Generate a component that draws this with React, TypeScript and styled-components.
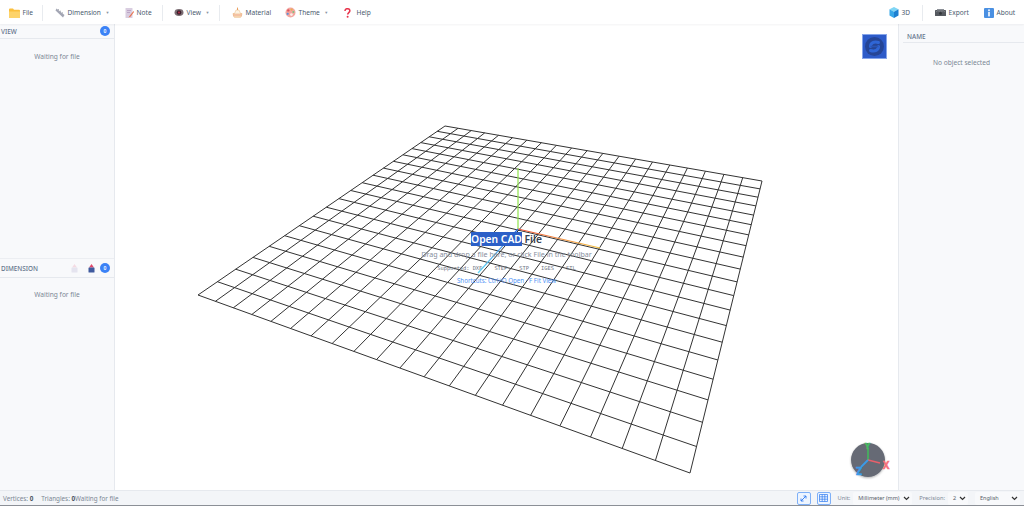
import { ReactElement } from 'react';
import styled, { createGlobalStyle } from 'styled-components';

const GlobalStyle = createGlobalStyle`
  html, body {
    margin: 0;
    padding: 0;
    height: 100%;
    overflow: hidden;
    background: #fff;
    font-family: 'Noto Sans', 'Open Sans', sans-serif;
  }
  #root { height: 100%; }
`;

// grid corners measured from the reference, mapped through a homography
type Pt = [number, number];
const CORNERS: Pt[] = [
  [445, 126],
  [762, 181],
  [690, 473],
  [198, 295],
];
const DIVISIONS = 20;

const makeProject = (q: Pt[]) => {
  const [[x0, y0], [x1, y1], [x2, y2], [x3, y3]] = q;
  const dx1 = x1 - x2;
  const dx2 = x3 - x2;
  const sx = x0 - x1 + x2 - x3;
  const dy1 = y1 - y2;
  const dy2 = y3 - y2;
  const sy = y0 - y1 + y2 - y3;
  const det = dx1 * dy2 - dx2 * dy1;
  const g = (sx * dy2 - dx2 * sy) / det;
  const h = (dx1 * sy - sx * dy1) / det;
  const a = x1 - x0 + g * x1;
  const b = x3 - x0 + h * x3;
  const d = y1 - y0 + g * y1;
  const e = y3 - y0 + h * y3;
  return (u: number, v: number): Pt => {
    const w = g * u + h * v + 1;
    return [(a * u + b * v + x0) / w, (d * u + e * v + y0) / w];
  };
};

const project = makeProject(CORNERS);

const gridPath = (): string => {
  let d = '';
  const fmt = (p: Pt) => `${p[0].toFixed(1)} ${p[1].toFixed(1)}`;
  for (let i = 0; i <= DIVISIONS; i++) {
    const t = i / DIVISIONS;
    d += `M${fmt(project(t, 0))}L${fmt(project(t, 1))}`;
    d += `M${fmt(project(0, t))}L${fmt(project(1, t))}`;
  }
  return d;
};

const Shell = styled.div`
  display: flex;
  flex-direction: column;
  height: 506px;
  width: 1024px;
  color: #4b5563;
`;

const Toolbar = styled.header`
  display: flex;
  align-items: center;
  justify-content: space-between;
  height: 24px;
  flex: none;
  padding: 1px 6px 0 9px;
  box-sizing: border-box;
  background: #fff;
  box-shadow: 0 1px 2px rgba(15, 23, 42, 0.05);
  position: relative;
  z-index: 2;
`;

const ToolGroup = styled.div`
  display: flex;
  align-items: center;
`;

const ToolButton = styled.div<{ $w: number }>`
  display: flex;
  align-items: center;
  gap: 2.5px;
  width: ${({ $w }) => $w}px;
  font-size: 6.6px;
  line-height: 10px;
  color: #4b5a6e;
  white-space: nowrap;
`;

const Caret = styled.span`
  font-size: 4px;
  margin-left: 2px;
  color: #8a93a3;
`;

const ToolDivider = styled.div<{ $gap: number }>`
  width: 1px;
  height: 16px;
  background: #e8ebef;
  margin: 0 ${({ $gap }) => $gap}px 0 0;
`;

const Main = styled.div`
  display: flex;
  flex: 1;
  min-height: 0;
`;

const SidePanel = styled.aside<{ $w: number; $side: 'left' | 'right' }>`
  display: flex;
  flex-direction: column;
  flex: none;
  width: ${({ $w }) => $w}px;
  background: #f8f9fb;
  border-${({ $side }) => ($side === 'left' ? 'right' : 'left')}: 1px solid #e6e9ee;
  box-sizing: border-box;
`;

const PanelSection = styled.section<{ $h?: number }>`
  flex: ${({ $h }) => ($h ? `0 0 ${$h}px` : '1')};
  min-height: 0;
`;

const PanelHeader = styled.div`
  display: flex;
  align-items: center;
  justify-content: space-between;
  height: 15px;
  padding: 0 4px 0 1px;
  border-bottom: 1px solid #e6e9ee;
  box-sizing: border-box;
  font-size: 6.4px;
  font-weight: 500;
  color: #64748b;
`;

const TallHeader = styled(PanelHeader)`
  height: 20px;
  border-top: 1px solid #eceef2;
`;

const NameHeader = styled(PanelHeader)`
  height: 19px;
  margin-left: 4px;
  padding: 6px 4px 0;
`;

const HeaderTools = styled.div`
  display: flex;
  align-items: center;
`;

const PinSlot = styled.span<{ $mr: number }>`
  display: flex;
  margin-right: ${({ $mr }) => $mr}px;
`;

const Badge = styled.span`
  display: flex;
  align-items: center;
  justify-content: center;
  width: 10px;
  height: 10px;
  border-radius: 50%;
  background: #3b82f6;
  color: #fff;
  font-size: 5px;
  font-weight: 600;
`;

const EmptyText = styled.div<{ $top: number }>`
  padding-top: ${({ $top }) => $top}px;
  text-align: center;
  font-size: 6.6px;
  line-height: 10px;
  color: #7b8794;
`;

const Viewport = styled.main`
  position: relative;
  flex: 1;
  min-width: 0;
  background: #fff;
  overflow: hidden;
`;

const GridSvg = styled.svg`
  position: absolute;
  inset: 0;
  width: 100%;
  height: 100%;
`;

const Hint = styled.div`
  position: absolute;
  left: 0;
  right: 0;
  top: 208px;
  display: flex;
  flex-direction: column;
  align-items: center;
`;

const HintTitle = styled.div`
  font-size: 10.3px;
  line-height: 15px;
  font-weight: 600;
  color: #374151;
  white-space: pre;
`;

const Selected = styled.span`
  background: #2b5fc7;
  color: #fff;
`;

const HintBody = styled.div`
  margin-top: 2px;
  font-size: 7.1px;
  line-height: 11px;
  color: #868e9c;
`;

const Formats = styled.div`
  display: flex;
  gap: 12px;
  margin-top: 2px;
  font-family: 'DejaVu Sans Mono', monospace;
  font-size: 5.4px;
  line-height: 12px;
  color: #6f7684;
`;

const FormatsLabel = styled.span`
  margin-right: -9px;
`;

const Shortcuts = styled.div`
  margin-top: 1px;
  font-size: 6.2px;
  line-height: 12px;
  color: #4f93f5;
`;

const Thumb = styled.div`
  position: absolute;
  top: 10px;
  right: 11px;
  width: 25px;
  height: 25px;
`;

const Gizmo = styled.div`
  position: absolute;
  right: 7px;
  bottom: 7px;
  width: 42px;
  height: 42px;
`;

const StatusBar = styled.footer`
  display: flex;
  align-items: center;
  justify-content: space-between;
  flex: none;
  height: 16px;
  padding: 0 4px 0 3px;
  background: #f3f5f8;
  border-top: 1px solid #e6e9ee;
  border-bottom: 1px solid #8b8f96;
  box-sizing: border-box;
  font-size: 6.3px;
  color: #7b8794;
`;

const StatusGroup = styled.div`
  display: flex;
  align-items: center;
`;

const StatusCount = styled.span`
  font-weight: 700;
  color: #4b5563;
`;

const StatusItem = styled.span<{ $gap?: number }>`
  margin-right: ${({ $gap }) => $gap ?? 0}px;
  white-space: nowrap;
`;

const SquareButton = styled.div<{ $mr: number }>`
  display: flex;
  align-items: center;
  justify-content: center;
  width: 14px;
  height: 13px;
  margin-right: ${({ $mr }) => $mr}px;
  border: 1px solid #7fb0f7;
  border-radius: 2px;
  background: #eef5ff;
  box-sizing: border-box;
`;

const FieldLabel = styled.span`
  margin-right: 3px;
  font-size: 5.7px;
  white-space: nowrap;
`;

const FakeSelect = styled.div<{ $w: number; $gap: number }>`
  display: flex;
  align-items: center;
  justify-content: space-between;
  width: ${({ $w }) => $w}px;
  height: 13px;
  margin-right: ${({ $gap }) => $gap}px;
  padding: 0 2px 0 5px;
  background: #f8f9fb;
  border-radius: 2px;
  box-sizing: border-box;
  font-size: 5.5px;
  color: #555b66;
  white-space: nowrap;
`;

const FolderIcon = () => (
  <svg width="11" height="10" viewBox="0 0 11 10">
    <path d="M0 1.5a1 1 0 0 1 1-1h3l1 1.2h5a1 1 0 0 1 1 1V9a1 1 0 0 1-1 1H1a1 1 0 0 1-1-1z" fill="#fbbf3c" />
    <path d="M0 3.4h11V9a1 1 0 0 1-1 1H1a1 1 0 0 1-1-1z" fill="#fdd36a" />
  </svg>
);

const RulerIcon = () => (
  <svg width="10" height="10" viewBox="0 0 10 10">
    <path d="M1.5 0.5 9.5 7 8 9.5 0.5 2.5z" fill="#a3a6b4" />
    <path d="M3 2 4 1.2M5 3.6 6 2.8M7 5.2 8 4.4" stroke="#7b7f8c" strokeWidth="0.6" />
  </svg>
);

const NoteIcon = () => (
  <svg width="9" height="10" viewBox="0 0 9 10">
    <rect x="0.5" y="0" width="7" height="10" rx="0.6" fill="#d9cde0" />
    <path d="M2 2.5h4M2 4.5h3" stroke="#a78bb5" strokeWidth="0.6" />
    <path d="M8.5 3 4.5 8 3.5 9.5 5.5 8.8 9 4z" fill="#e8734f" />
  </svg>
);

const EyeIcon = () => (
  <svg width="10" height="9" viewBox="0 0 10 9">
    <ellipse cx="5" cy="4.5" rx="4.5" ry="3.4" fill="#7a6c72" />
    <circle cx="5" cy="4.5" r="2.3" fill="#3b1f2b" />
    <circle cx="5" cy="4.5" r="1" fill="#b5304a" />
  </svg>
);

const MaterialIcon = () => (
  <svg width="11" height="11" viewBox="0 0 11 11">
    <path d="M1 6.5h9l-.7 3a1 1 0 0 1-1 .8H2.7a1 1 0 0 1-1-.8z" fill="#f7d9b5" stroke="#e5a86a" strokeWidth="0.5" />
    <path d="M2.5 6.5 4 3h3l1.5 3.5" fill="#fdf3e3" stroke="#e9b680" strokeWidth="0.5" />
    <path d="M5.5 3V0.6" stroke="#e8944e" strokeWidth="0.9" />
    <path d="M1.2 8h8.6" stroke="#ef8f7a" strokeWidth="0.6" />
  </svg>
);

const PaletteIcon = () => (
  <svg width="11" height="11" viewBox="0 0 11 11">
    <circle cx="5.5" cy="5.5" r="5" fill="#f3a6a0" />
    <circle cx="3.3" cy="3.4" r="1.2" fill="#e0565f" />
    <circle cx="6.6" cy="2.6" r="1.1" fill="#e9b04c" />
    <circle cx="8.4" cy="5" r="1" fill="#7cc47f" />
    <circle cx="2.7" cy="6.8" r="1.1" fill="#5a8fd8" />
    <circle cx="6.4" cy="7.6" r="1.4" fill="#fbeee8" />
  </svg>
);

const HelpIcon = () => (
  <svg width="10" height="10" viewBox="0 0 10 10">
    <path d="M1 2.9C1 1.5 2 .7 3.4 .7s2.5 .8 2.5 2.1c0 1.8-2.2 1.9-2.2 3.6" fill="none" stroke="#e8324a" strokeWidth="1.5" />
    <circle cx="3.6" cy="8.8" r="1" fill="#e8324a" />
  </svg>
);

const CubeIcon = () => (
  <svg width="10" height="11" viewBox="0 0 10 11">
    <path d="M5 0 9.5 2.3 5 4.8 .5 2.3z" fill="#7fd6f5" />
    <path d="M.5 2.3 5 4.8V11L.5 8.5z" fill="#37a7e8" />
    <path d="M9.5 2.3 5 4.8V11l4.5-2.5z" fill="#1c7fd1" />
  </svg>
);

const CameraIcon = () => (
  <svg width="11" height="7" viewBox="0 0 11 7">
    <rect x="0" y="1" width="11" height="6" rx="0.6" fill="#55595f" />
    <rect x="2" y="0" width="7" height="1.5" fill="#8b8f96" />
    <path d="M1 2.6h9" stroke="#a5a9b0" strokeWidth="0.5" strokeDasharray="1 0.6" />
    <circle cx="5.5" cy="4.4" r="1.4" fill="#33363b" />
  </svg>
);

const InfoIcon = () => (
  <svg width="10" height="10" viewBox="0 0 10 10">
    <rect width="10" height="10" rx="1" fill="#4a90e2" />
    <rect x="4.2" y="1.4" width="1.6" height="1.6" fill="#fff" />
    <rect x="4.2" y="3.8" width="1.6" height="4.6" fill="#fff" />
  </svg>
);

const PinIcon = ({ faded }: { faded?: boolean }) => (
  <svg width="9" height="9" viewBox="0 0 9 9" opacity={faded ? 0.16 : 1}>
    <path d="M4.5 0 7 3.4H2z" fill="#e0486a" />
    <rect x="1.5" y="3.4" width="6" height="5" rx="0.5" fill={faded ? '#8a7fb5' : '#3f5a9e'} />
  </svg>
);

const Chevron = () => (
  <svg width="7" height="5" viewBox="0 0 7 5">
    <path d="M1 1 3.5 3.5 6 1" fill="none" stroke="#333" strokeWidth="1.2" />
  </svg>
);

const FORMATS = ['DXF', 'STEP', 'STP', 'IGES', 'STL'];

export default function App(): ReactElement {
  return (
    <Shell>
      <GlobalStyle />
      <Toolbar>
        <ToolGroup>
          <ToolButton $w={33}><FolderIcon />File</ToolButton>
          <ToolDivider $gap={12} />
          <ToolButton $w={70}><RulerIcon />Dimension<Caret>▼</Caret></ToolButton>
          <ToolButton $w={37}><NoteIcon />Note</ToolButton>
          <ToolDivider $gap={11} />
          <ToolButton $w={45}><EyeIcon />View<Caret>▼</Caret></ToolButton>
          <ToolDivider $gap={12} />
          <ToolButton $w={53}><MaterialIcon />Material</ToolButton>
          <ToolButton $w={59}><PaletteIcon />Theme<Caret>▼</Caret></ToolButton>
          <ToolButton $w={40}><HelpIcon />Help</ToolButton>
        </ToolGroup>
        <ToolGroup>
          <ToolButton $w={33}><CubeIcon />3D</ToolButton>
          <ToolDivider $gap={12} />
          <ToolButton $w={49}><CameraIcon />Export</ToolButton>
          <ToolButton $w={34}><InfoIcon />About</ToolButton>
        </ToolGroup>
      </Toolbar>
      <Main>
        <SidePanel $w={115} $side="left">
          <PanelSection $h={234}>
            <PanelHeader>
              VIEW
              <Badge>0</Badge>
            </PanelHeader>
            <EmptyText $top={13}>Waiting for file</EmptyText>
          </PanelSection>
          <PanelSection>
            <TallHeader>
              DIMENSION
              <HeaderTools>
                <PinSlot $mr={8}><PinIcon faded /></PinSlot>
                <PinSlot $mr={4}><PinIcon /></PinSlot>
                <Badge>0</Badge>
              </HeaderTools>
            </TallHeader>
            <EmptyText $top={12}>Waiting for file</EmptyText>
          </PanelSection>
        </SidePanel>
        <Viewport>
          <GridSvg viewBox="115 24 783 466" preserveAspectRatio="xMinYMin">
            <defs>
              <linearGradient id="ax" gradientUnits="userSpaceOnUse" x1="518" y1="229" x2="600" y2="248">
                <stop offset="0" stopColor="#f0523a" />
                <stop offset="1" stopColor="#f5c542" />
              </linearGradient>
              <linearGradient id="az" gradientUnits="userSpaceOnUse" x1="518" y1="229" x2="478" y2="273">
                <stop offset="0" stopColor="#2f6be0" />
                <stop offset="1" stopColor="#5fd6f5" />
              </linearGradient>
            </defs>
            <path d={gridPath()} fill="none" stroke="#333" strokeWidth="1" />
            <path d="M518 229V168" stroke="#8fe34a" strokeWidth="1.2" />
            <path d="M518 229L600 248" stroke="url(#ax)" strokeWidth="1.2" />
            <path d="M518 229L478 273" stroke="url(#az)" strokeWidth="1.2" />
          </GridSvg>
          <Hint>
            <HintTitle><Selected>Open CAD</Selected> File</HintTitle>
            <HintBody>Drag and drop a file here, or click File in the toolbar</HintBody>
            <Formats>
              <FormatsLabel>Supported:</FormatsLabel>
              {FORMATS.map((f) => <span key={f}>{f}</span>)}
            </Formats>
            <Shortcuts>Shortcuts: Ctrl+O Open · F Fit View</Shortcuts>
          </Hint>
          <Thumb>
            <svg width="25" height="25" viewBox="0 0 25 25">
              <rect x="0.5" y="0.5" width="24" height="24" fill="#2d5bc9" stroke="#86a5ea" />
              <circle cx="12.5" cy="12.5" r="9.5" fill="#254596" />
              <path d="M16.5 8.5C12 7 8.5 9 8.5 12.5M8.5 16.5C13 18 16.5 16 16.5 12.5" fill="none" stroke="#2f66d6" strokeWidth="3" strokeLinecap="round" />
              <path d="M8.5 12.5 16.5 12.5" stroke="#2a55b4" strokeWidth="1.6" />
            </svg>
          </Thumb>
          <Gizmo>
            <svg width="42" height="42" viewBox="0 0 42 42" overflow="visible">
              <defs>
                <filter id="sh" x="-20%" y="-20%" width="140%" height="140%">
                  <feDropShadow dx="0" dy="1" stdDeviation="1.2" floodOpacity="0.3" />
                </filter>
              </defs>
              <circle cx="19" cy="19" r="17" fill="#666a75" filter="url(#sh)" />
              <path d="M19 19V7" stroke="#43b85c" strokeWidth="1.6" />
              <path d="M19 19 31 22" stroke="#e8606a" strokeWidth="1.6" />
              <path d="M19 19 12 26" stroke="#3b9be8" strokeWidth="1.8" />
              <text x="18.5" y="8" textAnchor="middle" fontSize="8" fontWeight="700" fill="#43c060" stroke="#43c060" strokeWidth="0.5" fontFamily="Noto Sans">Y</text>
              <text x="37" y="27.5" textAnchor="middle" fontSize="10" fontWeight="700" fill="#f4707a" stroke="#f4707a" strokeWidth="0.5" fontFamily="Noto Sans">X</text>
              <text x="10" y="34" textAnchor="middle" fontSize="10.5" fontWeight="700" fill="#3b9be8" stroke="#3b9be8" strokeWidth="0.5" fontFamily="Noto Sans">Z</text>
            </svg>
          </Gizmo>
        </Viewport>
        <SidePanel $w={126} $side="right">
          <NameHeader>NAME</NameHeader>
          <EmptyText $top={15}>No object selected</EmptyText>
        </SidePanel>
      </Main>
      <StatusBar>
        <StatusGroup>
          <StatusItem $gap={8}>Vertices: <StatusCount>0</StatusCount></StatusItem>
          <StatusItem>Triangles: <StatusCount>0</StatusCount></StatusItem>
          <StatusItem>Waiting for file</StatusItem>
        </StatusGroup>
        <StatusGroup>
          <SquareButton $mr={6}>
            <svg width="7" height="7" viewBox="0 0 7 7">
              <path d="M1 6 6 1M3.5 1H6V3.5M1 3.5V6H3.5" fill="none" stroke="#2f7bf0" strokeWidth="0.9" />
            </svg>
          </SquareButton>
          <SquareButton $mr={7}>
            <svg width="9" height="8" viewBox="0 0 9 8">
              <path d="M.5 .5h8v7h-8zM.5 2.8h8M.5 5.2h8M3.2 .5v7M5.8 .5v7" fill="none" stroke="#2f7bf0" strokeWidth="0.7" />
            </svg>
          </SquareButton>
          <FieldLabel>Unit:</FieldLabel>
          <FakeSelect $w={59} $gap={7}>Millimeter (mm)<Chevron /></FakeSelect>
          <FieldLabel>Precision:</FieldLabel>
          <FakeSelect $w={20} $gap={7}>2<Chevron /></FakeSelect>
          <FakeSelect $w={45} $gap={0}>English<Chevron /></FakeSelect>
        </StatusGroup>
      </StatusBar>
    </Shell>
  );
}
